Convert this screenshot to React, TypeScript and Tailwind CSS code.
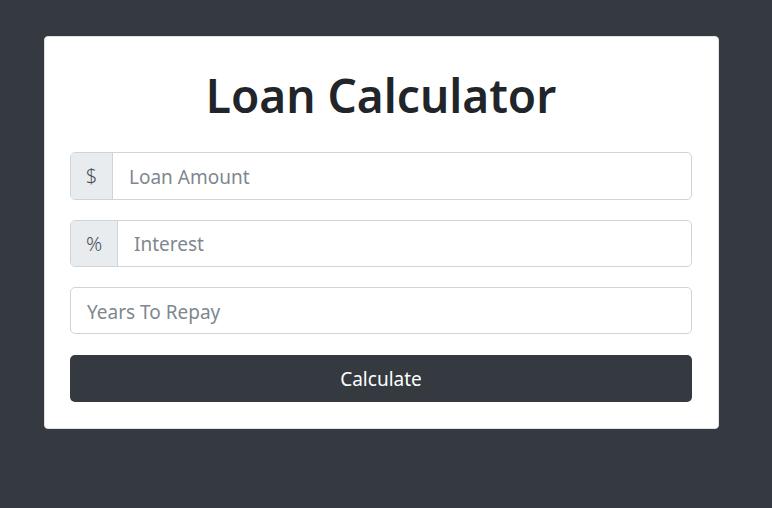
export default function App() {
  const font = { fontFamily: '"Noto Sans", "Open Sans", sans-serif' };
  return (
    <div className="min-h-screen bg-[#343a40] pt-[36px]" style={font}>
      <div className="ml-[44px] w-[675px] rounded-[4px] border border-[#dee2e6] bg-white pl-[25px] pr-[26px] pt-[25px] pb-[26px]">
        <h1 className="mb-[23px] text-center text-[46px] font-semibold leading-[67px] text-[#212529]">
          Loan Calculator
        </h1>
        <div className="mb-[20px] flex h-[48px] rounded-[5px] border border-[#ced4da]">
          <span className="flex w-[42px] items-center justify-center rounded-l-[4px] border-r border-[#ced4da] bg-[#e9ecef] text-[20px] font-light text-[#495057]">
            $
          </span>
          <input
            className="flex-1 rounded-r-[4px] px-[16px] pt-[2px] text-[19px] text-[#495057] outline-none placeholder:text-[#7f878f]"
            placeholder="Loan Amount"
          />
        </div>
        <div className="mb-[20px] flex h-[47px] rounded-[5px] border border-[#ced4da]">
          <span className="flex w-[47px] items-center justify-center rounded-l-[4px] border-r border-[#ced4da] bg-[#e9ecef] text-[20px] font-light text-[#495057]">
            %
          </span>
          <input
            className="flex-1 rounded-r-[4px] px-[16px] pt-[2px] text-[19px] text-[#495057] outline-none placeholder:text-[#7f878f]"
            placeholder="Interest"
          />
        </div>
        <input
          className="mb-[21px] block h-[47px] w-full rounded-[5px] border border-[#ced4da] px-[16px] pt-[2px] text-[19px] text-[#495057] outline-none placeholder:text-[#7f878f]"
          placeholder="Years To Repay"
        />
        <button className="block h-[47px] w-full rounded-[5px] bg-[#343a40] pt-[2px] text-[19px] text-white">
          Calculate
        </button>
      </div>
    </div>
  );
}
